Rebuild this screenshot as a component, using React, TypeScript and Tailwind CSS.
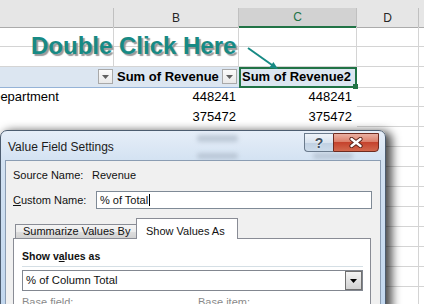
import React from "react";

const GRID = "grid grid-cols-[114px_125px_118px_62px_5px]";
const G = "border-r border-b border-[#d4d4d4]";
const GE = "border-b border-[#d4d4d4]";

function DD() {
  return (
    <div className="flex h-[15px] w-[15px] items-center justify-center border border-[#a9a9a9] bg-[linear-gradient(#fbfbfb,#e9e9e9)]">
      <svg width="7" height="4" viewBox="0 0 7 4">
        <path d="M0 0H7L3.5 4Z" fill="#606060" />
      </svg>
    </div>
  );
}

function PlainRow() {
  return (
    <div className={`${GRID} h-[20px]`}>
      <div className={G} />
      <div className={G} />
      <div className={G} />
      <div className={G} />
      <div className={GE} />
    </div>
  );
}

function DataRow({ name, b, c }: { name?: string; b?: string; c?: string }) {
  return (
    <div className={`${GRID} h-[20px] text-[13px]`}>
      <div className="flex items-center overflow-hidden whitespace-nowrap">
        {name ? <span className="-ml-[9px]">{name}</span> : null}
      </div>
      <div className="flex items-center justify-end pr-[3px]">{b}</div>
      <div className="flex items-center justify-end pr-[5px]">{c}</div>
      <div className={G} />
      <div className={GE} />
    </div>
  );
}

export default function App() {
  return (
    <div className="relative h-[304px] w-[424px] overflow-hidden bg-white font-['Liberation_Sans',Arial,sans-serif] text-black">
      {/* top strip */}
      <div className="h-[8px] bg-[#e6e6e6]" />
      {/* column headers */}
      <div className={`${GRID} h-[19px] text-[12px] text-[#262626]`}>
        <div className="border-b border-r border-b-[#ababab] border-r-[#c0c0c0] bg-[#e6e6e6]" />
        <div className="flex items-center justify-center border-b border-r border-b-[#ababab] border-r-[#c0c0c0] bg-[#e6e6e6]">B</div>
        <div className="flex items-center justify-center border-b-2 border-r border-b-[#217346] border-r-[#c0c0c0] bg-[#d2d2d2] text-[#217346]">C</div>
        <div className="flex items-center justify-center border-b border-r border-b-[#ababab] border-r-[#c0c0c0] bg-[#e6e6e6]">D</div>
        <div className="border-b border-b-[#ababab] bg-[#e6e6e6]" />
      </div>
      <PlainRow />
      <PlainRow />
      {/* pivot header row */}
      <div className={`${GRID} h-[20px] text-[13px] font-bold`}>
        <div className="flex items-center justify-end border-b border-[#95b3d7] bg-[#dce6f1] pr-[1px]">
          <DD />
        </div>
        <div className="flex items-center justify-between border-b border-[#95b3d7] bg-[#dce6f1] pl-[3px] pr-[2px]">
          <span>Sum of Revenue</span>
          <DD />
        </div>
        <div className="flex items-center whitespace-nowrap border-b border-[#95b3d7] bg-[#dce6f1] pl-[3px]">Sum of Revenue2</div>
        <div className={G} />
        <div className={GE} />
      </div>
      <DataRow name="Department" b="448241" c="448241" />
      <DataRow b="375472" c="375472" />
      <DataRow />
      <DataRow />
      <PlainRow />
      <PlainRow />
      <PlainRow />
      <PlainRow />
      <PlainRow />
      <PlainRow />
      <PlainRow />

      {/* selection */}
      <div className="absolute left-[239px] top-[67px] h-[21px] w-[118px] border-2 border-[#217346]" />
      <div className="absolute left-[353px] top-[84px] h-[5px] w-[5px] bg-[#217346]" />

      {/* callout text */}
      <div className="absolute left-[31px] top-[34px] whitespace-nowrap text-[24px] font-bold leading-[24px] text-[#178a84] [text-shadow:2px_2px_1px_#9a9a9a]">
        Double Click Here
      </div>
      <svg className="absolute left-[240px] top-[40px]" width="45" height="35" viewBox="0 0 45 35">
        <line x1="8" y1="8" x2="32" y2="25" stroke="#178a84" strokeWidth="2" />
        <polygon points="38,29 29.3,27.7 33.4,22.1" fill="#178a84" />
      </svg>

      {/* dialog */}
      <div className="absolute left-0 top-[130px] h-[190px] w-[386px] rounded-t-[7px] border border-[#4d5d70] bg-[linear-gradient(180deg,#e6eef8,#d3e2f2_30px,#c0d6ee)] shadow-[4px_3px_10px_2px_rgba(0,0,0,0.7)]">
        {/* glass smudges of the sheet behind */}
        <div className="absolute left-[196px] top-[4px] h-[7px] w-[41px] rounded-[3px] bg-[#a7b4c3] opacity-60 blur-[2px]" />
        <div className="absolute left-[196px] top-[22px] h-[6px] w-[41px] rounded-[3px] bg-[#a7b4c3] opacity-60 blur-[2px]" />
        <div className="absolute left-[312px] top-[22px] h-[6px] w-[40px] rounded-[3px] bg-[#a7b4c3] opacity-60 blur-[2px]" />
        <div className="relative flex h-[29px] items-center pl-[7px] pt-[2px] text-[12px] text-[#1b1b1b]">
          Value Field Settings
          <div className="absolute right-[6px] top-[2px] flex h-[19px]">
            <div className="flex h-full w-[29px] items-center justify-center rounded-bl-[4px] border border-r-0 border-[#6a7a8c] bg-[linear-gradient(#eef3f9,#d8e3ef_50%,#c0d0e2_51%,#ccdbea)]">
              <span className="text-[14px] font-bold leading-none text-[#44515f] [text-shadow:0_0_2px_#fff]">?</span>
            </div>
            <div className="flex h-full w-[46px] items-center justify-center rounded-br-[4px] border border-[#6e2b20] bg-[linear-gradient(#eab0a2,#dc806b_45%,#c5432d_50%,#d2684d)]">
              <svg width="14" height="11" viewBox="0 0 14 11">
                <path d="M2.5 2L11.5 9M11.5 2L2.5 9" stroke="#5a2219" strokeWidth="4.2" strokeLinecap="round" />
                <path d="M2.5 2L11.5 9M11.5 2L2.5 9" stroke="#ffffff" strokeWidth="2.4" strokeLinecap="round" />
              </svg>
            </div>
          </div>
        </div>
        <div className="relative mx-[4px] h-[150px] border border-[#8b9db3] bg-[#f0f0f0] text-[11px] text-[#111]">
          <div className="pl-[7px] pt-[7px]">
            <div className="flex h-[14px] items-center">
              <span className="w-[79px]">Source Name:</span>
              <span>Revenue</span>
            </div>
            <div className="mt-[9px] flex h-[18px] items-center">
              <span className="w-[83px]">
                <u>C</u>ustom Name:
              </span>
              <div className="flex h-[18px] w-[276px] items-center border border-[#7f8a96] bg-white pl-[3px]">
                % of Total
                <span className="ml-[1px] h-[12px] w-[1px] bg-black" />
              </div>
            </div>
          </div>
          <div className="ml-[7px] mt-[9px] w-[358px]">
            <div className="flex h-[20px] items-end pl-[2px]">
              <div className="flex h-[14px] w-[122px] items-center border border-b-0 border-[#898c95] bg-[linear-gradient(#f4f4f4,#ececec_50%,#dedede_51%,#d2d2d2)] pl-[7px]">
                Summarize Values By
              </div>
              <div className="relative z-10 -mb-px -ml-px h-[21px] w-[102px] border border-b-0 border-[#898c95] bg-white pl-[9px] pt-[4px]">
                Show Values As
              </div>
            </div>
            <div className="h-[80px] border border-[#898c95] bg-white pl-[8px] pt-[10px]">
              <div className="h-[14px] text-[10.5px] font-bold leading-[14px]">
                Show v<u>a</u>lues as
              </div>
              <div className="mt-[3px] h-px w-[341px] bg-[#d5dfe5]" />
              <div className="mt-[3px] flex h-[21px] w-[341px] items-center justify-between border border-[#828790]">
                <span className="pl-[3px] text-[11.3px]">% of Column Total</span>
                <div className="flex h-full w-[17px] items-center justify-center border border-[#707070] bg-[linear-gradient(#f4f4f4,#e2e2e2_50%,#d2d2d2)]">
                  <svg width="7" height="4" viewBox="0 0 7 4">
                    <path d="M0 0H7L3.5 4Z" fill="#000" />
                  </svg>
                </div>
              </div>
              <div className="mt-[3px] flex text-[#8a8a8a]">
                <span className="w-[176px]">Base field:</span>
                <span>Base item:</span>
              </div>
            </div>
          </div>
        </div>
      </div>
    </div>
  );
}
